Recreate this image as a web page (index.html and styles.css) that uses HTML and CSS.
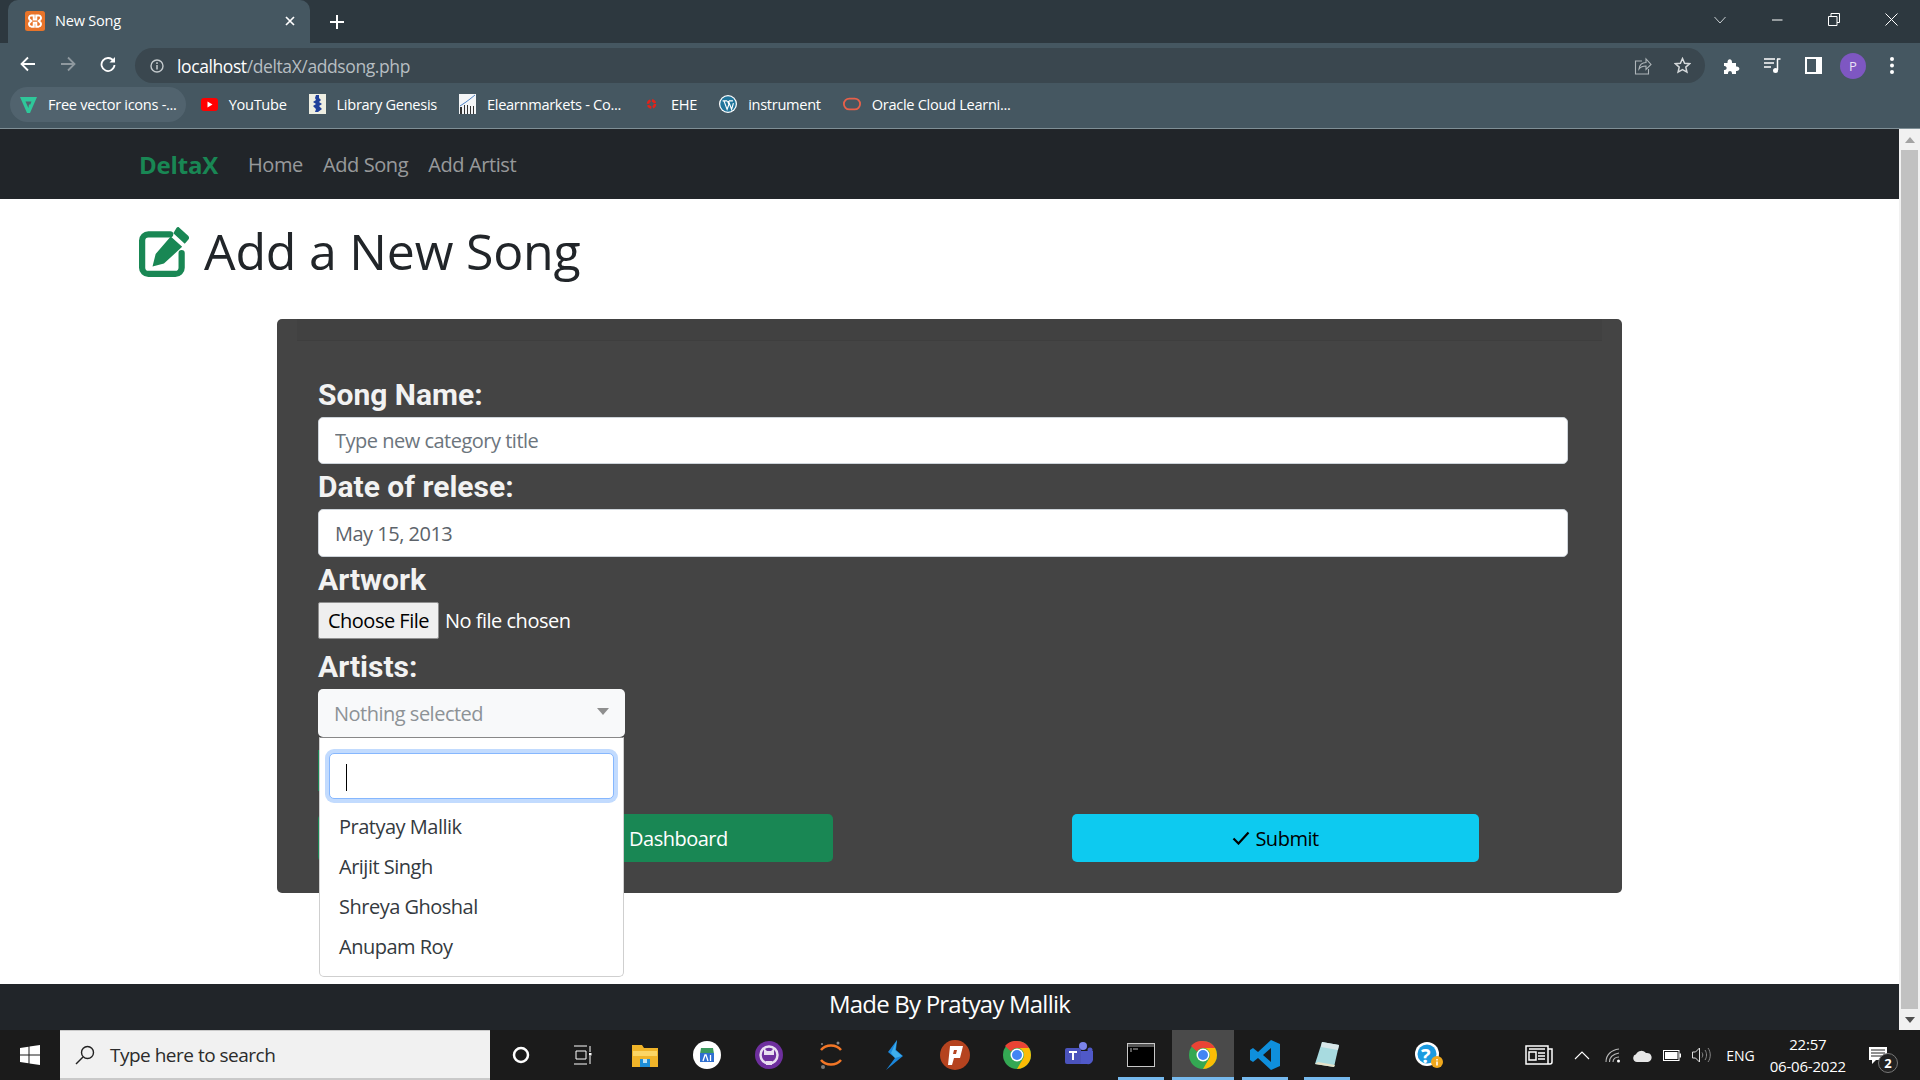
FILE: index.html
```html
<!DOCTYPE html>
<html>
<head>
  <title>New Song</title>
  <link rel="stylesheet" href="styles.css">
</head>
<body>
  <div class="tabstrip">
    <div class="tab">
      <svg class="favicon" width="20" height="20" viewBox="0 0 16 16"><rect width="16" height="16" rx="2" fill="#e8742a"/><path d="M5 3.500h2v3.200h2V3.500h2a2 2 0 0 1 1 3.600L11 8l1 .9a2 2 0 0 1-1 3.600H9V9.300H7v3.200H5a2 2 0 0 1-1-3.600L5 8l-1-.9a2 2 0 0 1 1-3.600z" fill="none" stroke="#fff" stroke-width="1.600"/></svg>
      <span class="tab-title">New Song</span>
      <svg class="tab-close" width="12" height="12" viewBox="0 0 12 12"><path d="M2 2l8 8M10 2l-8 8" stroke="#fff" stroke-width="1.700"/></svg>
    </div>
    <svg class="new-tab" width="14" height="14" viewBox="0 0 14 14"><path d="M7 0v14M0 7h14" stroke="#fff" stroke-width="2"/></svg>
    <div class="window-controls">
      <svg width="12" height="8" viewBox="0 0 12 8"><path d="M.5 1L6 7l5.500-6" fill="none" stroke="#c9cfd2"/></svg>
      <svg width="12" height="12" viewBox="0 0 12 12"><path d="M1 6h10.500" stroke="#fff"/></svg>
      <svg width="12" height="13" viewBox="0 0 12 13"><path d="M.5 3.500h8.500v9H.5zM3 3.500V.5h8.500v9H9" fill="none" stroke="#fff"/></svg>
      <svg width="13" height="13" viewBox="0 0 13 13"><path d="M.5.5l12 12M12.500.5l-12 12" stroke="#fff"/></svg>
    </div>
  </div>

  <div class="toolbar">
    <svg width="16" height="16" viewBox="0 0 16 16"><path d="M15 8H2M8 1.500L1.500 8 8 14.500" fill="none" stroke="#fff" stroke-width="1.800"/></svg>
    <svg width="16" height="16" viewBox="0 0 16 16"><path d="M1 8h13M8 1.500L14.500 8 8 14.500" fill="none" stroke="#8f999f" stroke-width="1.800"/></svg>
    <svg width="16" height="16" viewBox="0 0 16 16"><path d="M13.500 5A6.500 6.500 0 1 0 14.500 9" fill="none" stroke="#fff" stroke-width="1.800"/><path d="M15 1v5.500H9.500z" fill="#fff"/></svg>
    <div class="omnibox">
      <svg width="14" height="14" viewBox="0 0 14 14"><circle cx="7" cy="7" r="6" fill="none" stroke="#c5cbce" stroke-width="1.400"/><path d="M7 6v4.500M7 3.300v1.600" stroke="#c5cbce" stroke-width="1.500"/></svg>
      <div class="url"><span class="url-host">localhost</span>/deltaX/addsong.php</div>
      <svg width="18" height="18" viewBox="0 0 18 18"><path d="M8 4H1.500v13h13v-5M5 12c.5-4 3-6.500 7-6.500V2l5 5.500-5 5V9c-3 0-5.500 1-7 3z" fill="none" stroke="#aeb5b9" stroke-width="1.100"/></svg>
      <svg class="star" width="17" height="17" viewBox="0 0 17 17"><path d="M8.500 1.500l2.100 4.700 5 .5-3.800 3.400 1.100 5-4.400-2.600-4.400 2.600 1.100-5L1.400 6.700l5-.5z" fill="none" stroke="#d5d9db" stroke-width="1.500"/></svg>
    </div>
    <div class="toolbar-actions">
      <svg width="17" height="17" viewBox="0 0 17 17"><path d="M1 6h3.500c-.5-5 5-5 4.500 0H13v3.500c4.500-.5 4.500 5 0 4.500v3H9c.5-4-4.500-4-4 0H1v-4c3.500.5 3.500-4.500 0-4z" fill="#fff"/></svg>
      <svg width="17" height="17" viewBox="0 0 17 17"><path d="M0 2h11M0 6h10M0 10h7" stroke="#fff" stroke-width="1.500"/><path d="M13 2h3.500M13.500 2v11" fill="none" stroke="#fff" stroke-width="1.500"/><circle cx="11.500" cy="13.500" r="2.500" fill="#fff"/></svg>
      <svg width="17" height="17" viewBox="0 0 17 17"><rect x="1" y="1" width="15" height="15" fill="none" stroke="#fff" stroke-width="2"/><rect x="11" y="1" width="5" height="15" fill="#fff"/></svg>
      <div class="avatar">P</div>
      <svg width="4" height="17" viewBox="0 0 4 17"><circle cx="2" cy="2" r="2" fill="#fff"/><circle cx="2" cy="8.500" r="2" fill="#fff"/><circle cx="2" cy="15" r="2" fill="#fff"/></svg>
    </div>
  </div>

  <div class="bookmarks">
    <div class="bookmark bookmark-hover">
      <svg width="17" height="17" viewBox="0 0 17 17"><path d="M0 1h17l-7 16H7z" fill="#2fc79a"/><path d="M5.500 5.500h6l-1.200 3H9l-.6 3.500z" fill="#51636e"/></svg>
      <span>Free vector icons -...</span>
    </div>
    <div class="bookmark">
      <svg width="17" height="13" viewBox="0 0 17 13"><rect width="17" height="13" rx="3" fill="#f00"/><path d="M6.500 3.500l5 3-5 3z" fill="#fff"/></svg>
      <span>YouTube</span>
    </div>
    <div class="bookmark">
      <svg width="17" height="20" viewBox="0 0 17 20"><rect width="17" height="20" fill="#eeeee2"/><path d="M7 1h3v3l2 2-2 2 3 2-3 2 3 3-4 3H6l1-3-3-3 3-2-3-2 3-2-1-2z" fill="#20409a"/></svg>
      <span>Library Genesis</span>
    </div>
    <div class="bookmark">
      <svg width="17" height="20" viewBox="0 0 17 20"><rect width="17" height="20" fill="#f3f5f7"/><path d="M1 12l6-4 4-3 5-4" fill="none" stroke="#4f83c4"/><path d="M1 13h2v7H1zM5 11h1v9H5zM8 11h1v9H8zM11 12h1v8h-1zM14 12h1v8h-1z" fill="#333"/></svg>
      <span>Elearnmarkets - Co...</span>
    </div>
    <div class="bookmark">
      <svg width="17" height="10" viewBox="-3.500 0 17 10"><circle cx="5" cy="5" r="3.500" fill="none" stroke="#e2231a" stroke-width="2.500" stroke-dasharray="4 1.500"/></svg>
      <span>EHE</span>
    </div>
    <div class="bookmark">
      <svg width="18" height="18" viewBox="0 0 20 20"><circle cx="10" cy="10" r="10" fill="#fff"/><circle cx="10" cy="10" r="8.600" fill="#21759b"/><path d="M4 6.500h5M11 6.500h4.500M5.500 6.500L9 16l2-5.500-1.500-4M10.500 6.500L14 16l2-7" fill="none" stroke="#fff" stroke-width="1.300"/></svg>
      <span>instrument</span>
    </div>
    <div class="bookmark">
      <svg width="18" height="14" viewBox="0 0 20 15"><rect x="1" y="1.500" width="18" height="12" rx="6" fill="none" stroke="#e8604a" stroke-width="2"/></svg>
      <span>Oracle Cloud Learni...</span>
    </div>
  </div>

  <div class="viewport">
    <div class="page">
      <nav class="navbar">
        <a class="brand">DeltaX</a>
        <a class="nav-link">Home</a>
        <a class="nav-link">Add Song</a>
        <a class="nav-link">Add Artist</a>
      </nav>

      <main class="content">
        <h1 class="page-title">
          <svg width="52" height="52" viewBox="0 0 50 50"><path d="M30 9H9a6 6 0 0 0-6 6v26a6 6 0 0 0 6 6h26a6 6 0 0 0 6-6V27" fill="none" stroke="#198754" stroke-width="6" stroke-linecap="round"/><path d="M38 2l9.500 8.500a3 3 0 0 1 0 3.500L44 18l-11-10 3-5a2 2 0 0 1 2-1zM30.500 11l11 10L24 37l-11 3 3-12z" fill="#198754"/></svg>
          <span>Add a New Song</span>
        </h1>

        <form class="card">
          <div class="card-header"></div>
          <div class="card-body">
            <label class="field-label">Song Name:</label>
            <input class="field-input" type="text" placeholder="Type new category title">
            <label class="field-label label-date">Date of relese:</label>
            <div class="field-input date-value">May 15, 2013</div>
            <label class="field-label label-artwork">Artwork</label>
            <div class="file-row">
              <div class="file-button">Choose File</div>
              <span class="file-name">No file chosen</span>
            </div>
            <label class="field-label label-artists">Artists:</label>
            <div class="select">
              <div class="select-toggle">
                <span>Nothing selected</span>
                <i class="caret"></i>
              </div>
              <div class="select-menu">
                <div class="select-search"><span class="text-cursor"></span></div>
                <div class="select-item">Pratyay Mallik</div>
                <div class="select-item">Arijit Singh</div>
                <div class="select-item">Shreya Ghoshal</div>
                <div class="select-item">Anupam Roy</div>
              </div>
            </div>
            <div class="hidden-btn"></div>
            <div class="form-actions">
              <div class="btn btn-green">Dashboard</div>
              <div class="btn btn-cyan">
                <svg width="18" height="14" viewBox="0 0 18 14"><path d="M1.500 7.500L6.500 12.500 16.500 1.500" fill="none" stroke="#000" stroke-width="2.200"/></svg>
                Submit
              </div>
            </div>
          </div>
        </form>
      </main>

      <footer class="site-footer">Made By Pratyay Mallik</footer>
    </div>
    <div class="scrollbar">
      <div class="scroll-btn"><i class="arrow-up"></i></div>
      <div class="scroll-thumb"></div>
      <div class="scroll-btn"><i class="arrow-down"></i></div>
    </div>
  </div>

  <div class="taskbar">
    <div class="start">
      <svg width="20" height="20" viewBox="0 0 20 20"><path d="M0 3l8.500-1.200V9.500H0zM9.500 1.600L20 0v9.500H9.500zM0 10.500h8.500v7.700L0 17zM9.500 10.500H20V20L9.500 18.400z" fill="#fff"/></svg>
    </div>
    <div class="search-box">
      <svg width="20" height="20" viewBox="0 0 20 20"><circle cx="12.500" cy="7.500" r="6" fill="none" stroke="#222" stroke-width="1.400"/><path d="M8 12l-7 7" stroke="#222" stroke-width="1.400"/></svg>
      <span>Type here to search</span>
    </div>
    <div class="task-icon"><svg width="18" height="18" viewBox="0 0 18 18"><circle cx="9" cy="9" r="7" fill="none" stroke="#fff" stroke-width="2.500"/></svg></div>
    <div class="task-icon"><svg width="18" height="20" viewBox="0 0 18 20"><path d="M0 1h13M0 19h13M2 6h10v8H2zM16 1v6M16 11v8" fill="none" stroke="#fff"/><rect x="15" y="8" width="2.500" height="2.500" fill="#fff"/></svg></div>
    <div class="task-icon"><svg width="26" height="24" viewBox="0 0 26 24"><path d="M0 2h10l2 3h14v19H0z" fill="#f0b429"/><path d="M1 8h24v5H1z" fill="#fbd565"/><path d="M8 16h10v8H8z" fill="#1f8fd8"/><path d="M11 16h4v4h-4z" fill="#bfe3f5"/></svg></div>
    <div class="task-icon"><svg width="28" height="28" viewBox="0 0 28 28"><circle cx="14" cy="14" r="14" fill="#fff"/><path d="M8 7h12l1 6H7z" fill="#3c9a5f"/><path d="M7 12h14v9H7z" fill="#2f6fd0"/><path d="M10 20l2-6h1l2 6M17.500 14v6" fill="none" stroke="#fff" stroke-width="1.300"/></svg></div>
    <div class="task-icon"><svg width="28" height="28" viewBox="0 0 28 28"><circle cx="14" cy="14" r="14" fill="#6e2f9e"/><circle cx="14" cy="14" r="8.500" fill="none" stroke="#e8dff0" stroke-width="2.500"/><path d="M9 7l3 3h4l3-3v7H9zM11 20v4h6v-4z" fill="#e8dff0"/></svg></div>
    <div class="task-icon"><svg width="24" height="30" viewBox="0 0 24 30"><path d="M2 10c5-6 15-6 20 0M2 20c5 6 15 6 20 0" fill="none" stroke="#f37626" stroke-width="2.500"/><circle cx="19" cy="3" r="1.500" fill="#8a8a8a"/><circle cx="4" cy="27" r="2" fill="#7a7a7a"/><circle cx="3" cy="4" r="1" fill="#8a8a8a"/></svg></div>
    <div class="task-icon"><svg width="20" height="30" viewBox="0 0 20 30"><path d="M14 0L5 12l7 6-9 12 17-14-7-6z" fill="#1b87dc"/><path d="M14 0L8 13l4 5 7-2-7-6z" fill="#4fc0f5" opacity=".7"/></svg></div>
    <div class="task-icon"><svg width="30" height="30" viewBox="0 0 30 30"><circle cx="15" cy="15" r="15" fill="#b5431f"/><path d="M10 6h13l-3 12h-6l-2 7H8zM14 10l-1 4h3l1-4z" fill="#fff" fill-rule="evenodd"/></svg></div>
    <div class="task-icon">
      <svg width="28" height="28" viewBox="0 0 28 28"><circle cx="14" cy="14" r="14" fill="#34a853"/><path d="M14 0a14 14 0 0 1 12.100 7H14a7 7 0 0 0-6.100 3.500L2 5.100A14 14 0 0 1 14 0z" fill="#ea4335"/><path d="M26.100 7A14 14 0 0 1 14 28l6.100-10.500A7 7 0 0 0 14 7z" fill="#fbbc05"/><circle cx="14" cy="14" r="6.500" fill="#fff"/><circle cx="14" cy="14" r="5" fill="#4285f4"/></svg>
    </div>
    <div class="task-icon"><svg width="28" height="28" viewBox="0 0 28 28"><circle cx="18" cy="5" r="4" fill="#7b83eb"/><circle cx="25" cy="9" r="2.500" fill="#5059c9"/><path d="M14 10h14v9a5 5 0 0 1-6 4h-8z" fill="#5059c9"/><rect x="0" y="7" width="16" height="16" rx="2" fill="#4b53bc"/><path d="M4 11h8M8 11v8" stroke="#fff" stroke-width="2"/></svg></div>
    <div class="task-icon task-open"><svg width="28" height="24" viewBox="0 0 28 24"><rect width="28" height="24" fill="#c8c8c8"/><rect x="1" y="1" width="26" height="3" fill="#555"/><rect x="1" y="4" width="26" height="19" fill="#000"/><path d="M3 6h2M6 6h5M3 8h2" stroke="#bbb"/></svg></div>
    <div class="task-icon task-open task-active"><svg width="28" height="28" viewBox="0 0 28 28"><circle cx="14" cy="14" r="14" fill="#34a853"/><path d="M14 0a14 14 0 0 1 12.100 7H14a7 7 0 0 0-6.100 3.500L2 5.100A14 14 0 0 1 14 0z" fill="#ea4335"/><path d="M26.100 7A14 14 0 0 1 14 28l6.100-10.500A7 7 0 0 0 14 7z" fill="#fbbc05"/><circle cx="14" cy="14" r="6.500" fill="#fff"/><circle cx="14" cy="14" r="5" fill="#4285f4"/></svg></div>
    <div class="task-icon task-open"><svg width="30" height="30" viewBox="0 0 30 30"><path d="M21 0l9 4v22l-9 4L8 18l-5 4-3-2V10l3-2 5 4zM21 8l-8 7 8 7z" fill="#0f8fdc" fill-rule="evenodd"/></svg></div>
    <div class="task-icon task-open"><svg width="26" height="28" viewBox="0 0 26 28"><path d="M8 1l17 3-5 22L1 23z" fill="#a8dbe0"/><path d="M8 1l17 3-1 5L7 6z" fill="#d8e6e8"/><path d="M1 23l19 3 1-2-17-3z" fill="#e7e2c8"/></svg></div>
    <div class="task-help"><svg width="30" height="30" viewBox="0 0 30 30"><circle cx="13" cy="14" r="12" fill="#fff"/><circle cx="13" cy="14" r="9.500" fill="#1b9ae0"/><circle cx="23" cy="22" r="6" fill="#f0a81c"/><path d="M23 19v1.500M23 21.500V25.500" stroke="#fff" stroke-width="1.500"/></svg><span class="help-mark">?</span></div>
    <div class="tray">
      <svg width="28" height="20" viewBox="0 0 28 20"><path d="M1 1h22v18H1zM23 4h4v13a2 2 0 0 1-2 2h-2" fill="none" stroke="#fff" stroke-width="1.500"/><rect x="4" y="7" width="7" height="8" fill="none" stroke="#fff" stroke-width="1.500"/><path d="M4 4h16M13 8h7M13 11h7M13 14h7" stroke="#fff" stroke-width="1.500"/></svg>
      <svg class="tray-caret" width="16" height="9" viewBox="0 0 16 9"><path d="M1 8l7-7 7 7" fill="none" stroke="#fff" stroke-width="1.100"/></svg>
      <svg width="16" height="16" viewBox="0 0 16 16"><path d="M1 15C1 8 6 3 14 2M4.500 15c0-5 4-8 9.500-9M8 15c0-3 2-5 6-5" fill="none" stroke="#b9b9b9" stroke-width="1.100"/><circle cx="13.500" cy="14" r="1.500" fill="#fff"/></svg>
      <svg width="20" height="13" viewBox="0 0 20 13"><path d="M5 13a4 4 0 0 1-1-7.800A6 6 0 0 1 14 4a4.500 4.500 0 0 1 2 9z" fill="#e6e6e6"/></svg>
      <svg width="18" height="11" viewBox="0 0 18 11"><rect x=".5" y=".5" width="15.500" height="10" fill="none" stroke="#fff"/><rect x="2" y="2" width="12.500" height="7" fill="#fff"/><rect x="16.500" y="3.500" width="1.500" height="4" fill="#fff"/></svg>
      <svg width="20" height="16" viewBox="0 0 20 16"><path d="M.5 5h3L7.500 1v14L3.500 11h-3z" fill="none" stroke="#ddd"/><path d="M10 5.500c1 1.500 1 3.500 0 5M13 3c2 3 2 7 0 10M16 1c3 4 3 10 0 14" fill="none" stroke="#888"/></svg>
      <span class="tray-lang">ENG</span>
      <div class="clock"><span>22:57</span><span>06-06-2022</span></div>
      <div class="notify">
        <svg width="18" height="17" viewBox="0 0 18 17"><path d="M0 0h18v13H7l-4 4v-4H0z" fill="#fff"/><path d="M2 3h14M2 6h14M2 9h14" stroke="#222"/></svg>
        <span class="notify-badge">2</span>
      </div>
    </div>
  </div>
</body>
</html>
```

FILE: styles.css
```css
* {
  box-sizing: border-box;
}

html, body {
  height: 100%;
}

body {
  margin: 0;
  display: flex;
  flex-direction: column;
  overflow: hidden;
  font-family: "Open Sans", "Noto Sans", sans-serif;
  background-color: #fff;
}

svg {
  display: block;
  flex-shrink: 0;
}

/* browser chrome */
.tabstrip {
  height: 43px;
  display: flex;
  align-items: flex-end;
  background-color: #2d383f;
  padding-left: 8px;
}

.tab {
  width: 302px;
  height: 43px;
  display: flex;
  align-items: center;
  padding: 0 14px 2px 17px;
  background-color: #455761;
  border-radius: 10px 10px 0 0;
  color: #fff;
  font-size: 14.500px;
}

.tab-title {
  flex: 1;
  margin-left: 10px;
  letter-spacing: -0.2px;
}

.new-tab {
  margin: 0 0 14px 20px;
}

.window-controls {
  margin-left: auto;
  height: 43px;
  display: flex;
  align-items: center;
  gap: 45px;
  padding: 0 22px 4px 0;
}

.toolbar {
  height: 40px;
  display: flex;
  align-items: flex-start;
  background-color: #455761;
  padding: 0 0 0 20px;
  gap: 24px;
}

.toolbar > svg {
  margin-top: 13px;
}

.omnibox {
  flex: 1;
  height: 35px;
  margin: 5px 0 0 -5px;
  padding: 0 14px 0 15px;
  display: flex;
  align-items: center;
  background-color: #3a474f;
  border-radius: 18px;
}

.url {
  flex: 1;
  margin-left: 13px;
  font-size: 17.500px;
  letter-spacing: -0.4px;
  color: #b7bec2;
}

.url-host {
  color: #fff;
}

.star {
  margin-left: 22px;
}

.toolbar-actions {
  display: flex;
  align-items: center;
  gap: 24px;
  margin: 5px 0 0 -6px;
  height: 35px;
  padding-right: 26px;
}

.avatar {
  width: 26px;
  height: 26px;
  margin-left: -6px;
  border-radius: 50%;
  background-color: #7e57c2;
  color: #e8e0f5;
  font-size: 13px;
  display: flex;
  align-items: center;
  justify-content: center;
}

.bookmarks {
  height: 46px;
  display: flex;
  align-items: center;
  padding: 0 0 3px 10px;
  gap: 8px;
  background-color: #455761;
  border-bottom: 1px solid #7f8f96;
  color: #fff;
  font-size: 14.600px;
  letter-spacing: -0.3px;
}

.bookmark {
  height: 35px;
  display: flex;
  align-items: center;
  gap: 11px;
  padding: 0 7px;
  border-radius: 18px;
}

.bookmark-hover {
  background-color: #51636e;
  padding: 0 9px 0 10px;
}

/* page */
.viewport {
  flex: 1;
  min-height: 0;
  display: flex;
}

.page {
  flex: 1;
  min-width: 0;
  display: flex;
  flex-direction: column;
}

.navbar {
  height: 70px;
  flex-shrink: 0;
  display: flex;
  align-items: center;
  padding-left: 139px;
  background-color: #212529;
  font-size: 20px;
  letter-spacing: -0.4px;
}

.brand {
  color: #198754;
  font-size: 24px;
  font-weight: 700;
  letter-spacing: -0.2px;
  margin-right: 20px;
}

.nav-link {
  color: rgba(255, 255, 255, 0.55);
  margin: 0 10px;
}

.content {
  flex: 1;
  min-height: 0;
  padding: 0 0 0 139px;
}

.page-title {
  margin: 0;
  height: 120px;
  display: flex;
  align-items: center;
  gap: 13px;
  color: #212529;
  font-size: 50px;
  font-weight: 500;
  letter-spacing: -0.2px;
  padding-bottom: 17px;
}

.card {
  width: 1345px;
  height: 574px;
  margin-left: 138px;
  background-color: #444;
  border-radius: 5px;
  padding: 0 20px;
}

.card-header {
  height: 22px;
  background-color: rgba(0, 0, 0, 0.03);
  border-bottom: 1px solid #3e3e3e;
}

.card-body {
  padding: 34px 21px 0 21px;
}

.field-label {
  display: block;
  color: #f2f2f2;
  font-family: "Roboto", sans-serif;
  font-weight: 700;
  font-size: 30px;
  line-height: 40px;
}

.field-input {
  display: block;
  width: 1250px;
  height: 47px;
  margin-top: 2px;
  padding: 0 16px;
  border: 1px solid #ced4da;
  border-radius: 5px;
  background-color: #fff;
  font-family: inherit;
  font-size: 20px;
  letter-spacing: -0.5px;
  color: #212529;
}

.field-input::placeholder {
  color: #6c757d;
  opacity: 1;
}

.date-value {
  display: flex;
  align-items: center;
  height: 48px;
  color: #5c636a;
  margin-top: 2px;
}

.label-date {
  margin-top: 3px;
}

.label-artwork {
  margin-top: 3px;
}

.file-row {
  display: flex;
  align-items: center;
  color: #fff;
  font-size: 20px;
  letter-spacing: -0.5px;
  margin-top: 2px;
}

.file-button {
  width: 121px;
  height: 37px;
  display: flex;
  align-items: center;
  justify-content: center;
  background-color: #efefef;
  border: 1px solid #8f8f8f;
  border-radius: 2px;
  color: #000;
}

.file-name {
  margin-left: 6px;
}

.label-artists {
  margin-top: 8px;
}

.select {
  position: relative;
  width: 307px;
  margin-top: 2px;
}

.select-toggle {
  height: 48px;
  display: flex;
  align-items: center;
  justify-content: space-between;
  padding: 0 16px;
  background-color: #f8f9fa;
  border-radius: 5px;
  color: #8d9296;
  font-size: 20px;
  letter-spacing: -0.5px;
}

.caret {
  border-top: 7px solid #8f8f8f;
  border-left: 6px solid transparent;
  border-right: 6px solid transparent;
  margin: -4px 0 0 0;
}

.select-menu {
  position: absolute;
  top: 48px;
  left: 1px;
  right: 1px;
  height: 240px;
  z-index: 2;
  padding: 15px 9px 0 9px;
  background-color: #fff;
  border: 1px solid #cfcfcf;
  border-top-color: #888;
  border-radius: 0 0 5px 5px;
}

.select-search {
  height: 46px;
  padding: 10px 16px 0 16px;
  margin-bottom: 7px;
  background-color: #fff;
  border: 1px solid #86b7fe;
  border-radius: 5px;
  box-shadow: 0 0 0 4px #c2dbfe;
}

.text-cursor {
  display: block;
  width: 1px;
  height: 27px;
  background-color: #000;
}

.select-item {
  height: 40px;
  display: flex;
  align-items: center;
  margin-left: 10px;
  color: #343a40;
  font-size: 20px;
  letter-spacing: -0.5px;
}

/* sits behind the open menu, only its left edge shows */
.hidden-btn {
  width: 60px;
  height: 41px;
  margin-top: 13px;
  background-color: #198754;
}

.form-actions {
  display: flex;
  justify-content: space-between;
  width: 1161px;
  margin-top: 23px;
}

.btn {
  height: 48px;
  display: flex;
  align-items: center;
  justify-content: center;
  gap: 5px;
  border-radius: 5px;
  font-size: 20px;
  letter-spacing: -0.5px;
}

.btn-green {
  width: 515px;
  background-color: #198754;
  color: #fff;
  padding: 0 0 0 311px;
  justify-content: flex-start;
}

.btn-cyan {
  width: 407px;
  background-color: #0dcaf0;
  color: #000;
}

.site-footer {
  height: 46px;
  flex-shrink: 0;
  display: flex;
  align-items: center;
  justify-content: center;
  background-color: #212529;
  color: #fff;
  font-size: 24px;
  letter-spacing: -0.8px;
  padding-bottom: 7px;
}

.scrollbar {
  width: 21px;
  flex-shrink: 0;
  display: flex;
  flex-direction: column;
  background-color: #f1f1f1;
}

.scroll-btn {
  height: 21px;
  flex-shrink: 0;
  display: flex;
  align-items: center;
  justify-content: center;
}

.scroll-thumb {
  flex: 1;
  margin: 0 2px;
  background-color: #c1c1c1;
}

.arrow-up {
  border-bottom: 6px solid #a3a3a3;
  border-left: 5px solid transparent;
  border-right: 5px solid transparent;
}

.arrow-down {
  border-top: 6px solid #505050;
  border-left: 5px solid transparent;
  border-right: 5px solid transparent;
}

/* taskbar */
.taskbar {
  height: 50px;
  flex-shrink: 0;
  display: flex;
  align-items: center;
  background-color: #1b1b1b;
}

.start {
  width: 60px;
  display: flex;
  justify-content: center;
}

.search-box {
  width: 430px;
  height: 50px;
  display: flex;
  align-items: center;
  gap: 15px;
  padding-left: 15px;
  background-color: #f1f1f1;
  border-top: 1px solid #c9c9c9;
  border-bottom: 2px solid #c9c9c9;
  color: #2b2b2b;
  font-size: 19px;
  letter-spacing: -0.5px;
}

.task-icon {
  width: 62px;
  height: 50px;
  display: flex;
  align-items: center;
  justify-content: center;
  position: relative;
}

.task-open::after {
  content: "";
  position: absolute;
  left: 8px;
  right: 8px;
  bottom: 0;
  height: 3px;
  background-color: #76b9ed;
}

.task-active {
  background-color: #4a4a4a;
}

.task-active::after {
  left: 0;
  right: 0;
}

.task-help {
  position: relative;
  margin-left: 56px;
  width: 30px;
}

.help-mark {
  position: absolute;
  top: 2px;
  left: 7px;
  color: #fff;
  font-size: 20px;
  font-weight: 700;
}

.tray {
  margin-left: auto;
  display: flex;
  align-items: center;
  gap: 11px;
  margin-right: 18px;
  color: #fff;
}

.tray-caret {
  margin: 0 4px 0 10px;
}

.tray-lang {
  font-size: 14px;
  margin-left: 3px;
}

.clock {
  display: flex;
  flex-direction: column;
  align-items: center;
  gap: 4px;
  margin-left: 4px;
  font-size: 15px;
  letter-spacing: -0.2px;
  line-height: 18px;
}

.notify {
  position: relative;
  width: 46px;
  margin-left: -1px;
  padding-left: 13px;
}

.notify-badge {
  position: absolute;
  top: 6px;
  left: 22px;
  width: 20px;
  height: 20px;
  border-radius: 50%;
  border: 1px solid #777;
  background-color: #222;
  font-size: 13px;
  font-weight: 700;
  display: flex;
  align-items: center;
  justify-content: center;
}
```
